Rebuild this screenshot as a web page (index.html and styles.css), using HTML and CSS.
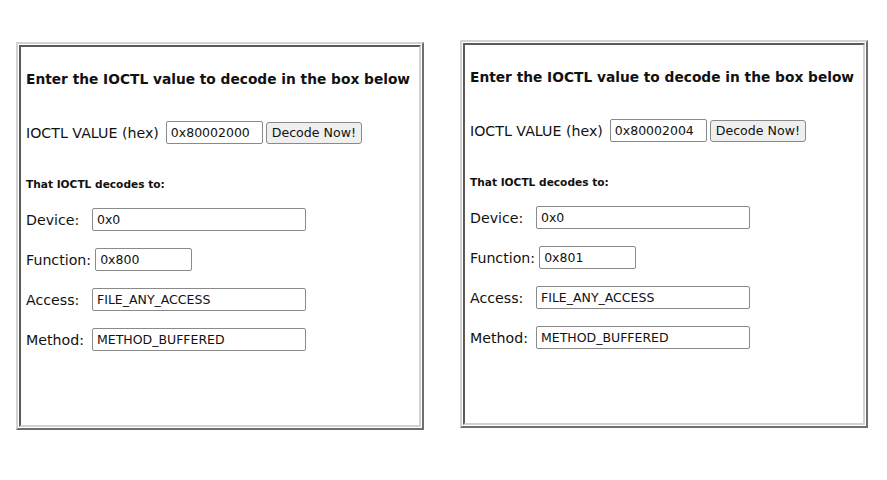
FILE: index.html
```html
<!DOCTYPE html>
<html lang="en">
<head>
    <meta charset="UTF-8">
    <title>IOCTL Decoder</title>
    <link rel="stylesheet" href="styles.css">
</head>
<body>
    <div class="page">
        <div class="panel">
            <div class="cell">
                <h3>Enter the IOCTL value to decode in the box below</h3>
                <div class="value-row">
                    <span>IOCTL VALUE (hex)</span>
                    <input class="field hex" type="text" value="0x80002000">
                    <button class="button">Decode Now!</button>
                </div>
                <h4>That IOCTL decodes to:</h4>
                <div class="row">
                    <label>Device:</label>
                    <input class="field wide" type="text" value="0x0">
                </div>
                <div class="row">
                    <label>Function:</label>
                    <input class="field short" type="text" value="0x800">
                </div>
                <div class="row">
                    <label>Access:</label>
                    <input class="field wide" type="text" value="FILE_ANY_ACCESS">
                </div>
                <div class="row">
                    <label>Method:</label>
                    <input class="field wide" type="text" value="METHOD_BUFFERED">
                </div>
            </div>
        </div>

        <div class="panel raised">
            <div class="cell">
                <h3>Enter the IOCTL value to decode in the box below</h3>
                <div class="value-row">
                    <span>IOCTL VALUE (hex)</span>
                    <input class="field hex" type="text" value="0x80002004">
                    <button class="button">Decode Now!</button>
                </div>
                <h4>That IOCTL decodes to:</h4>
                <div class="row">
                    <label>Device:</label>
                    <input class="field wide" type="text" value="0x0">
                </div>
                <div class="row">
                    <label>Function:</label>
                    <input class="field short" type="text" value="0x801">
                </div>
                <div class="row">
                    <label>Access:</label>
                    <input class="field wide" type="text" value="FILE_ANY_ACCESS">
                </div>
                <div class="row">
                    <label>Method:</label>
                    <input class="field wide" type="text" value="METHOD_BUFFERED">
                </div>
            </div>
        </div>
    </div>
</body>
</html>
```

FILE: styles.css
```css
body {
    margin: 0;
    padding: 0;
    background-color: #fff;
    color: #111;
    font-family: "DejaVu Sans", Verdana, sans-serif;
    font-size: 14.2px;
}
.page {
    display: flex;
    align-items: flex-start;
    gap: 36px;
    padding-left: 16px;
}
/* table-like box: outset frame, 1px spacing, inset cell */
.panel {
    width: 408px;
    height: 388px;
    box-sizing: border-box;
    margin-top: 42px;
    padding: 1px;
    border: 2px solid;
    border-color: #d2d2d2 #6e6e6e #6e6e6e #d2d2d2;
}
.panel.raised {
    margin-top: 40px;
}
.cell {
    height: 100%;
    box-sizing: border-box;
    padding: 0 5px;
    border: 2px solid;
    border-color: #5a5a5a #d2d2d2 #d2d2d2 #5a5a5a;
}
h3 {
    margin: 24px 0 0;
    font-size: 13.75px;
    line-height: 16px;
}
h4 {
    margin: 33px 0 0;
    font-size: 10.6px;
    line-height: 14px;
}
.value-row {
    display: flex;
    align-items: center;
    margin-top: 34px;
    line-height: 18px;
}
.value-row span {
    margin-right: 7px;
}
.row {
    display: flex;
    align-items: center;
    gap: 4px;
    margin-top: 17px;
    line-height: 18px;
}
.row label {
    min-width: 62px;
}
.field {
    height: 23px;
    box-sizing: border-box;
    padding: 0 4px;
    border: 1px solid #8a8a8a;
    border-radius: 2px;
    font-family: inherit;
    font-size: 12.5px;
    color: #111;
}
.field.hex {
    width: 97px;
}
.field.wide {
    width: 214px;
}
.field.short {
    width: 97px;
}
.button {
    height: 22px;
    width: 96px;
    margin-left: 3px;
    padding: 0;
    border: 1px solid #8a8a8a;
    border-radius: 3px;
    background-color: #efefef;
    font-family: inherit;
    font-size: 12.6px;
    color: #111;
}
```
